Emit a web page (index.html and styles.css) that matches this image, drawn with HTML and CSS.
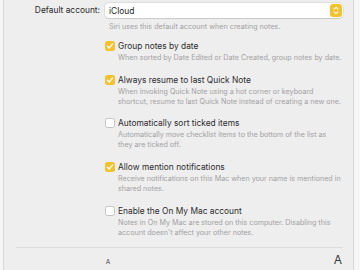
FILE: index.html
```html
<!DOCTYPE html>
<html>
<head>
<meta charset="utf-8">
<link rel="stylesheet" href="styles.css">
</head>
<body>
<div class="window">
  <div class="pane">
    <div class="account">
      <div class="label">Default account:</div>
      <div class="field">
        <div class="popup">
          <span class="popup-text">iCloud</span>
          <span class="stepper">
            <svg width="12" height="13" viewBox="0 0 12 13"><path d="M4 5.2 L6 3.4 L8 5.2 M4 7.8 L6 9.6 L8 7.8" fill="none" stroke="#fff" stroke-width="1.1" stroke-linecap="round" stroke-linejoin="round"/></svg>
          </span>
        </div>
        <div class="hint">Siri uses this default account when creating notes.</div>
      </div>
    </div>

    <div class="options">
      <div class="option">
        <span class="cb on"><svg width="10" height="10" viewBox="0 0 10 10"><path d="M2.4 5.2 L4.2 7 L7.6 2.9" fill="none" stroke="#fff" stroke-width="1.3" stroke-linecap="round" stroke-linejoin="round"/></svg></span>
        <div class="text">
          <div class="title">Group notes by date</div>
          <div class="desc">When sorted by Date Edited or Date Created, group notes by date.</div>
        </div>
      </div>
      <div class="option">
        <span class="cb on"><svg width="10" height="10" viewBox="0 0 10 10"><path d="M2.4 5.2 L4.2 7 L7.6 2.9" fill="none" stroke="#fff" stroke-width="1.3" stroke-linecap="round" stroke-linejoin="round"/></svg></span>
        <div class="text">
          <div class="title">Always resume to last Quick Note</div>
          <div class="desc">When invoking Quick Note using a hot corner or keyboard<br>shortcut, resume to last Quick Note instead of creating a new one.</div>
        </div>
      </div>
      <div class="option">
        <span class="cb"></span>
        <div class="text">
          <div class="title">Automatically sort ticked items</div>
          <div class="desc">Automatically move checklist items to the bottom of the list as<br>they are ticked off.</div>
        </div>
      </div>
      <div class="option">
        <span class="cb on"><svg width="10" height="10" viewBox="0 0 10 10"><path d="M2.4 5.2 L4.2 7 L7.6 2.9" fill="none" stroke="#fff" stroke-width="1.3" stroke-linecap="round" stroke-linejoin="round"/></svg></span>
        <div class="text">
          <div class="title">Allow mention notifications</div>
          <div class="desc">Receive notifications on this Mac when your name is mentioned in<br>shared notes.</div>
        </div>
      </div>
      <div class="option">
        <span class="cb"></span>
        <div class="text">
          <div class="title">Enable the On My Mac account</div>
          <div class="desc">Notes in On My Mac are stored on this computer. Disabling this<br>account doesn't affect your other notes.</div>
        </div>
      </div>
    </div>

    <div class="sep"></div>

    <div class="size">
      <div class="label"></div>
      <div class="size-marks">
        <span class="a-small">A</span>
        <span class="a-big">A</span>
      </div>
    </div>
    <div class="size-row">
      <div class="label">Default text size:</div>
      <div class="slider"></div>
    </div>
  </div>
</div>
</body>
</html>
```

FILE: styles.css
```css
html, body {
  margin: 0;
  padding: 0;
}
body {
  width: 360px;
  height: 270px;
  overflow: hidden;
  background: #f6f6f6;
  font-family: Inter, "Liberation Sans", sans-serif;
  color: #262626;
}
.window {
  display: flex;
  height: 270px;
}
.pane {
  margin-left: 3px;
  width: 351px;
  box-sizing: border-box;
  border-left: 1px solid #d8d7d8;
  border-right: 1px solid #d8d7d8;
  background: #efeeef;
  padding-top: 3px;
}
.account {
  display: grid;
  grid-template-columns: 96px 238px;
  column-gap: 5px;
}
.label {
  text-align: right;
  font-size: 8.4px;
  line-height: 15px;
  color: #2a2a2a;
}
.popup {
  height: 15px;
  box-sizing: border-box;
  background: #fff;
  border-radius: 4px;
  box-shadow: 0 0 0 0.5px rgba(0,0,0,0.12), 0 0.5px 1px rgba(0,0,0,0.1);
  display: flex;
  align-items: center;
  justify-content: space-between;
  padding: 0 1px 0 4px;
}
.popup-text {
  font-size: 8.4px;
  color: #222;
}
.stepper {
  width: 12px;
  height: 13px;
  border-radius: 3px;
  background: #f2c230;
  display: flex;
}
.hint {
  margin-top: 4px;
  padding-left: 4px;
  font-size: 7.2px;
  line-height: 10px;
  color: #a09fa0;
  white-space: nowrap;
}
.options {
  margin-top: 8px;
  padding-left: 101px;
  display: flex;
  flex-direction: column;
  gap: 10.7px;
}
.option {
  display: flex;
  align-items: flex-start;
  gap: 3px;
}
.cb {
  flex: none;
  width: 10px;
  height: 10px;
  margin-top: 1px;
  box-sizing: border-box;
  border-radius: 2.5px;
  background: #fff;
  border: 0.5px solid #c4c3c4;
  display: flex;
}
.cb.on {
  background: #f2c230;
  border: none;
}
.title {
  font-size: 8.4px;
  line-height: 12px;
  color: #2c2c2c;
  white-space: nowrap;
}
.desc {
  margin-top: 1px;
  font-size: 7.15px;
  line-height: 10px;
  color: #a09fa0;
  white-space: nowrap;
}
.sep {
  margin: 9.5px 10px 0 12px;
  height: 1px;
  background: #dddcdd;
}
.size {
  display: grid;
  grid-template-columns: 96px 238px;
  column-gap: 5px;
  margin-top: 5px;
}
.size-marks {
  display: flex;
  justify-content: space-between;
  align-items: baseline;
  padding: 0 1px 0 1px;
  line-height: 14px;
}
.a-small {
  font-size: 6px;
  color: #3a3a3a;
}
.a-big {
  font-size: 12px;
  color: #3a3a3a;
}
.size-row {
  display: grid;
  grid-template-columns: 96px 238px;
  column-gap: 5px;
  margin-top: -2px;
}
.slider {
  height: 3px;
  margin-top: 6px;
  background: #d8d7d8;
  border-radius: 2px;
}
```
